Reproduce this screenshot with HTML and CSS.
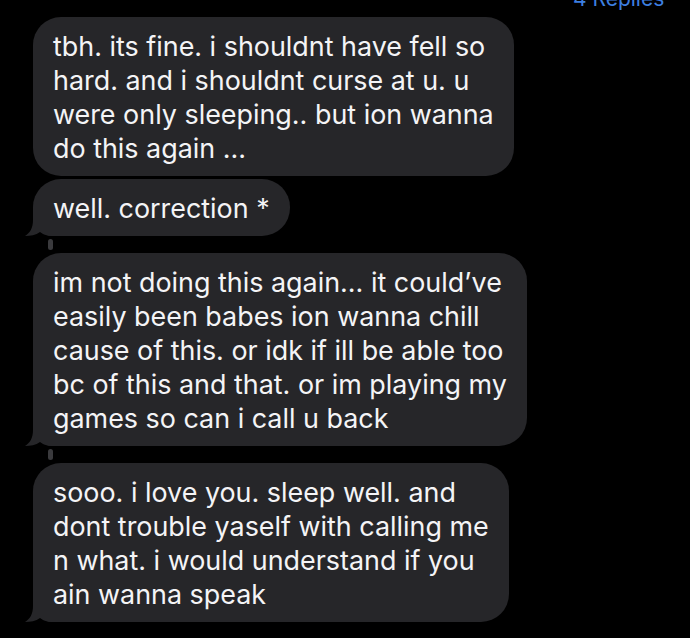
FILE: index.html
```html
<!DOCTYPE html>
<html>
<head>
<meta charset="utf-8">
<link rel="stylesheet" href="styles.css">
</head>
<body>
<div class="screen">
  <div class="replies">4 Replies</div>
  <div class="thread">
    <div class="bubble">tbh. its fine. i shouldnt have fell so<br>hard. and i shouldnt curse at u. u<br>were only sleeping.. but ion wanna<br>do this again ...</div>
    <div class="bubble tail">well. correction *<svg class="tail-svg" width="28" height="26" viewBox="0 0 28 26"><path d="M8,0 L8,10 C8,18 5,23 0,26 C5,26 11,25 15,22 C18,24 21,26 28,26 L28,0 Z"/></svg></div>
    <div class="link"></div>
    <div class="bubble tail">im not doing this again... it could’ve<br>easily been babes ion wanna chill<br>cause of this. or idk if ill be able too<br>bc of this and that. or im playing my<br>games so can i call u back<svg class="tail-svg" width="28" height="26" viewBox="0 0 28 26"><path d="M8,0 L8,10 C8,18 5,23 0,26 C5,26 11,25 15,22 C18,24 21,26 28,26 L28,0 Z"/></svg></div>
    <div class="link"></div>
    <div class="bubble tail">sooo. i love you. sleep well. and<br>dont trouble yaself with calling me<br>n what. i would understand if you<br>ain wanna speak<svg class="tail-svg" width="28" height="26" viewBox="0 0 28 26"><path d="M8,0 L8,10 C8,18 5,23 0,26 C5,26 11,25 15,22 C18,24 21,26 28,26 L28,0 Z"/></svg></div>
  </div>
</div>
</body>
</html>
```
FILE: styles.css
```css
html, body {
  margin: 0;
  padding: 0;
  background: #000;
}
.screen {
  position: relative;
  width: 690px;
  height: 638px;
  overflow: hidden;
  background: #000;
  font-family: Inter, "Liberation Sans", sans-serif;
}
.replies {
  position: absolute;
  top: -13px;
  left: 573px;
  font-size: 21px;
  color: #3d7fe0;
  line-height: 24px;
}
.thread {
  display: flex;
  flex-direction: column;
  align-items: flex-start;
  padding: 17px 0 0 33px;
}
.bubble {
  position: relative;
  background: #262629;
  color: #f4f4f6;
  font-size: 26.9px;
  line-height: 34px;
  padding: 11.5px 20px 11.5px 20px;
  border-radius: 28px;
  margin-bottom: 3px;
}
.bubble.tail {
  border-bottom-left-radius: 20px;
}
.tail-svg {
  position: absolute;
  left: -8px;
  bottom: 0;
  fill: #262629;
}
.link {
  width: 5px;
  height: 11px;
  border-radius: 3px;
  background: #3a3a3d;
  margin: 0 0 3px 15px;
}
```
